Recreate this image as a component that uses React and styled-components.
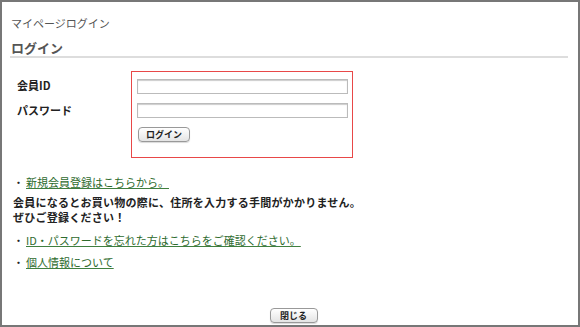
import React from 'react'
import styled, { createGlobalStyle } from 'styled-components'

const GlobalStyle = createGlobalStyle`
  html, body {
    margin: 0;
    padding: 0;
    background: #fff;
  }
  body {
    font-family: "Noto Sans CJK JP", "Liberation Sans", sans-serif;
    color: #222;
  }
`

const Frame = styled.div`
  width: 580px;
  height: 327px;
  box-sizing: border-box;
  border: 2px solid #777;
  padding: 0 10px 0 8px;
  display: flex;
  flex-direction: column;
`

const Crumb = styled.div`
  font-size: 11px;
  color: #555;
  margin-top: 14px;
  margin-left: 1px;
  line-height: 14px;
`

const Heading = styled.h2`
  margin: 10px 0 0;
  font-size: 13px;
  font-weight: bold;
  color: #555;
  line-height: 16px;
  padding: 0 0 0 1px;
  border-bottom: 2px solid #ddd;
`

const LoginRow = styled.div`
  display: flex;
  margin-top: 13px;
`

const Labels = styled.div`
  width: 121px;
  box-sizing: border-box;
  padding: 7px 0 0 7px;
  display: flex;
  flex-direction: column;
  gap: 10px;
`

const Label = styled.div`
  font-size: 11px;
  font-weight: bold;
  color: #222;
  line-height: 15px;
`

const FormBox = styled.div`
  width: 222px;
  height: 87px;
  box-sizing: border-box;
  border: 1px solid #e84848;
  padding: 7px 5px 0;
  display: flex;
  flex-direction: column;
  gap: 9px;
`

const Input = styled.input`
  width: 211px;
  height: 15px;
  box-sizing: border-box;
  border: 1px solid #bbb;
  box-shadow: inset 0 1px 1px #ccc;
  margin: 0;
  padding: 0;
`

const Button = styled.button`
  font-family: "Noto Sans CJK JP", "Liberation Sans", sans-serif;
  font-size: 9px;
  font-weight: bold;
  color: #222;
  height: 15px;
  width: ${p => p.w}px;
  padding: 0;
  line-height: 13px;
  border: 1px solid #999;
  border-radius: 4px;
  background: linear-gradient(#fff, #e4e4e4);
  box-shadow: 0 1px 1px rgba(0, 0, 0, 0.15);
`

const FormButton = styled(Button)`
  margin-left: 1px;
`

const Info = styled.div`
  margin-top: 17px;
  padding-left: 3px;
  font-size: 11px;
  line-height: 15px;
`

const LinkLine = styled.div`
  margin-top: ${p => p.top}px;
  color: #222;
`

const Bullet = styled.span`
  padding-right: 2px;
`

const GreenLink = styled.a`
  color: #2e6b2e;
  text-decoration: underline;
  text-decoration-color: #3f7f3f;
`

const Note = styled.p`
  margin: 5px 0 0;
  font-weight: bold;
  color: #222;
  line-height: 15px;
  letter-spacing: 0.25px;
`

const Footer = styled.div`
  margin-top: auto;
  margin-bottom: 2px;
  display: flex;
  justify-content: center;
  padding-left: 9px;
`

export default function App() {
  return (
    <>
      <GlobalStyle />
      <Frame>
        <Crumb>マイページログイン</Crumb>
        <Heading>ログイン</Heading>
        <LoginRow>
          <Labels>
            <Label>会員ID</Label>
            <Label>パスワード</Label>
          </Labels>
          <FormBox>
            <Input type="text" />
            <Input type="password" />
            <FormButton w={52}>ログイン</FormButton>
          </FormBox>
        </LoginRow>
        <Info>
          <LinkLine top={0}>
            <Bullet>・</Bullet>
            <GreenLink href="#">新規会員登録はこちらから。</GreenLink>
          </LinkLine>
          <Note>
            会員になるとお買い物の際に、住所を入力する手間がかかりません。
            <br />
            ぜひご登録ください！
          </Note>
          <LinkLine top={8}>
            <Bullet>・</Bullet>
            <GreenLink href="#">ID・パスワードを忘れた方はこちらをご確認ください。</GreenLink>
          </LinkLine>
          <LinkLine top={7}>
            <Bullet>・</Bullet>
            <GreenLink href="#">個人情報について</GreenLink>
          </LinkLine>
        </Info>
        <Footer>
          <Button w={48}>閉じる</Button>
        </Footer>
      </Frame>
    </>
  )
}
